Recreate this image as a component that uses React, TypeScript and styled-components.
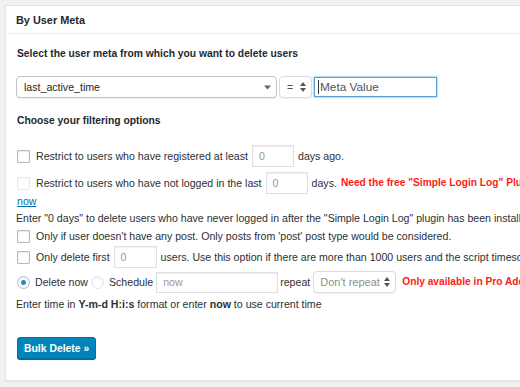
import React from "react";
import styled, { createGlobalStyle } from "styled-components";

const GlobalStyle = createGlobalStyle`
  html, body { margin: 0; padding: 0; }
  body {
    background: #f1f1f1;
    overflow: hidden;
    font-family: "Liberation Sans", Arial, Helvetica, sans-serif;
    font-size: 10.6px;
    color: #2c3035;
    width: 520px;
    height: 387px;
  }
`;

const Page = styled.div`
  padding: 5px 0 0 5px;
`;

const Postbox = styled.div`
  width: 820px;
  background: #fff;
  border: 1px solid #e5e5e5;
  box-shadow: 0 1px 1px rgba(0, 0, 0, 0.04);
`;

const PostboxHeader = styled.h2`
  margin: 0;
  height: 27px;
  line-height: 29px;
  padding: 0 10px;
  font-size: 10.9px;
  font-weight: 700;
  border-bottom: 1px solid #eee;
  color: #23282d;
`;

const Inside = styled.div`
  padding: 0 10px 21px 10px;
  white-space: nowrap;
`;

const Heading = styled.h4<{ $top: number }>`
  margin: ${(p) => p.$top}px 0 0 1px;
  font-size: 10.3px;
  font-weight: 700;
  line-height: 16px;
  height: 16px;
  color: #23282d;
`;

const Row = styled.div<{ $top: number; $h?: number }>`
  display: flex;
  align-items: center;
  margin-top: ${(p) => p.$top}px;
  height: ${(p) => p.$h ?? 22}px;
  line-height: 16px;
`;

const Line = styled.div<{ $top: number; $h?: number }>`
  margin-top: ${(p) => p.$top}px;
  height: ${(p) => p.$h ?? 16}px;
  line-height: ${(p) => p.$h ?? 16}px;
`;

const SelectBox = styled.div<{ $w: number; $light?: boolean; $muted?: boolean }>`
  box-sizing: border-box;
  display: flex;
  align-items: center;
  justify-content: space-between;
  flex: none;
  width: ${(p) => p.$w}px;
  height: 22px;
  padding: 0 5px 0 ${(p) => (p.$muted ? 6 : 7)}px;
  border: 1px solid ${(p) => (p.$light ? "#dcdcdc" : "#c4c4c4")};
  border-radius: 4px;
  background: #fff;
  box-shadow: 0 1px 1px rgba(0, 0, 0, 0.06);
  color: ${(p) => (p.$muted ? "#8f8f8f" : "#23282d")};
  font-size: ${(p) => (p.$muted ? 11 : 10.6)}px;
  margin-right: 2px;
`;

const TextInput = styled.div<{ $w: number; $focus?: boolean; $h?: number }>`
  box-sizing: border-box;
  display: flex;
  align-items: center;
  flex: none;
  width: ${(p) => p.$w}px;
  height: ${(p) => p.$h ?? 22}px;
  padding: 0 ${(p) => (p.$focus ? 3 : 6)}px;
  border: 1px solid ${(p) => (p.$focus ? "#5b9dd9" : "#e0e0e0")};
  box-shadow: ${(p) =>
    p.$focus ? "0 0 2px rgba(30,140,190,.8)" : "inset 0 1px 2px rgba(0,0,0,.07)"};
  background: #fff;
  color: ${(p) => (p.$focus ? "#50555a" : "#999")};
  font-size: ${(p) => (p.$focus ? 11.8 : 10.6)}px;
`;

const Caret = styled.span`
  display: inline-block;
  width: 1px;
  height: 14px;
  background: #333;
  margin-right: 1px;
`;

const Checkbox = styled.span<{ $light?: boolean }>`
  box-sizing: border-box;
  display: inline-block;
  width: 13px;
  height: 13px;
  border: 1px solid ${(p) => (p.$light ? "#e6e7e9" : "#b4b9be")};
  border-radius: 1px;
  box-shadow: inset 0 1px 2px rgba(0, 0, 0, ${(p) => (p.$light ? 0.04 : 0.1)});
  margin: 0 6px 0 1px;
  flex: none;
`;

const Radio = styled.span<{ $checked?: boolean; $left?: number }>`
  box-sizing: border-box;
  position: relative;
  display: inline-block;
  width: 13px;
  height: 13px;
  border: 1px solid ${(p) => (p.$checked ? "#b4b9be" : "#e2e4e7")};
  border-radius: 50%;
  box-shadow: inset 0 1px 2px rgba(0, 0, 0, 0.08);
  margin: 0 5px 0 ${(p) => p.$left ?? 1}px;
  flex: none;
  ${(p) =>
    p.$checked &&
    `&::after {
      content: "";
      position: absolute;
      left: 3px; top: 3px;
      width: 5px; height: 5px;
      border-radius: 50%;
      background: #1e8cbe;
    }`}
`;

const Gap = styled.span<{ $w: number }>`
  display: inline-block;
  width: ${(p) => p.$w}px;
  flex: none;
`;

const Red = styled.span`
  color: #ff1a1a;
  font-weight: 700;
  font-size: 10.2px;
  margin-left: 4px;
`;

const Link = styled.a`
  color: #0073aa;
  text-decoration: underline;
  margin-left: 1px;
`;

const Button = styled.button`
  display: block;
  margin-top: 25px;
  height: 22px;
  padding: 0 6px;
  background: #0085ba;
  border: 1px solid #0073aa;
  border-radius: 3px;
  box-shadow: 0 1px 0 #006799;
  color: #fff;
  font-family: inherit;
  font-size: 10.4px;
  font-weight: 700;
  cursor: pointer;
  margin-left: 1px;
`;

const DownArrow = () => (
  <svg width="7" height="5" viewBox="0 0 7 5">
    <path d="M0 0.5 L7 0.5 L3.5 4.5 Z" fill="#666" />
  </svg>
);

const UpDownArrow = () => (
  <svg width="6" height="10" viewBox="0 0 6 10">
    <path d="M0 4 L6 4 L3 0 Z" fill="#555" />
    <path d="M0 6 L6 6 L3 10 Z" fill="#555" />
  </svg>
);

export default function App() {
  return (
    <>
      <GlobalStyle />
      <Page>
        <Postbox>
          <PostboxHeader>By User Meta</PostboxHeader>
          <Inside>
            <Heading $top={12}>Select the user meta from which you want to delete users</Heading>
            <Row $top={14}>
              <SelectBox $w={261}>
                <span>last_active_time</span>
                <DownArrow />
              </SelectBox>
              <SelectBox $w={33} $light>
                <span style={{ color: "#555" }}>=</span>
                <UpDownArrow />
              </SelectBox>
              <TextInput $w={123} $h={20} $focus>
                <Caret />
                Meta Value
              </TextInput>
            </Row>
            <Heading $top={15}>Choose your filtering options</Heading>
            <Row $top={16}>
              <Checkbox />
              Restrict to users who have registered at least
              <Gap $w={4} />
              <TextInput $w={42}>0</TextInput>
              <Gap $w={4} />
              days ago.
            </Row>
            <Row $top={5}>
              <Checkbox $light />
              Restrict to users who have not logged in the last
              <Gap $w={4} />
              <TextInput $w={42}>0</TextInput>
              <Gap $w={4} />
              days.
              <Red>Need the free "Simple Login Log" Plugin</Red>
            </Row>
            <Line $top={0} $h={14}>
              <Link href="#">now</Link>
            </Line>
            <Line $top={2}>
              Enter "0 days" to delete users who have never logged in after the "Simple Login Log" plugin has been installed.
            </Line>
            <Row $top={2} $h={16}>
              <Checkbox />
              Only if user doesn't have any post. Only posts from 'post' post type would be considered.
            </Row>
            <Row $top={2}>
              <Checkbox />
              Only delete first
              <Gap $w={4} />
              <TextInput $w={43}>0</TextInput>
              <Gap $w={4} />
              users. Use this option if there are more than 1000 users and the script timesout.
            </Row>
            <Row $top={3}>
              <Radio $checked />
              Delete now
              <Radio $left={3} />
              Schedule
              <Gap $w={3} />
              <TextInput $w={122} $h={21}>now</TextInput>
              <Gap $w={2} />
              repeat
              <Gap $w={3} />
              <SelectBox $w={83} $light $muted>
                <span>Don't repeat</span>
                <UpDownArrow />
              </SelectBox>
              <Red>Only available in Pro Addon</Red>
            </Row>
            <Line $top={3}>
              Enter time in <b>Y-m-d H:i:s</b> format or enter <b>now</b> to use current time
            </Line>
            <Button>Bulk Delete »</Button>
          </Inside>
        </Postbox>
      </Page>
    </>
  );
}
